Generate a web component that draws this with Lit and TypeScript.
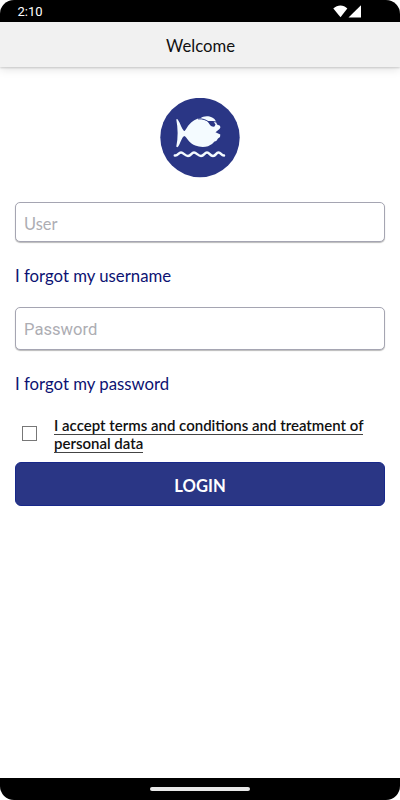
import { LitElement, html, css } from "lit";
import { customElement } from "lit/decorators.js";

@customElement("app-root")
export class AppRoot extends LitElement {
  static styles = css`
    :host { display: block; height: 800px; background: #fff; font-family: Lato, "Liberation Sans", sans-serif; }
    * { box-sizing: border-box; }
    .phone { height: 800px; display: flex; flex-direction: column; overflow: hidden; border-radius: 14px; background: #fff; }
    .status { height: 22px; flex: none; background: #000; display: flex; align-items: center; justify-content: space-between; padding: 1px 38.5px 0 17.5px; color: #fff; font: 13px/20px Roboto, sans-serif; }
    .status svg { display: block; margin-top: -2px; }
    .title { height: 45px; flex: none; background: #f1f1f1; text-align: center; font-size: 16.7px; line-height: 48px; padding-left: 1px; color: #111; box-shadow: 0 1px 2px #00000028, 0 2px 9px #00000020; }
    .content { flex: 1; padding: 31px 15px 0; display: flex; flex-direction: column; }
    .logo { display: block; align-self: center; width: 80px; height: 80px; }
    .field { width: 100%; height: 40px; margin-top: 24px; padding: 2px 8px 0; border: 1px solid #a5a5b2; border-radius: 5px; box-shadow: 0 1px 1px #00000045; background: #fff; font-family: inherit; font-size: 16.4px; color: #111; outline: none; }
    .field::placeholder { color: #adadb3; opacity: 1; }
    .password { height: 43px; margin-top: 22px; font-family: Roboto, sans-serif; font-size: 16.6px; }
    .link { height: 20px; margin-top: 23px; font-size: 16.75px; line-height: 22px; color: #0c1272; white-space: nowrap; }
    .after-password { margin-top: 23px; }
    .terms { display: flex; margin-top: 24px; height: 36px; padding-left: 7px; }
    .box { flex: none; width: 15px; height: 15px; border: 1px solid #777; margin: 9px 17px 0 0; }
    .terms-text { font-size: 15px; font-weight: 600; line-height: 17px; color: #111; white-space: nowrap; }
    .line { border-bottom: 1px solid #444; display: block; width: max-content; height: 18px; }
    .login { height: 44px; margin-top: 9.4px; border: 1px solid #18288a; border-radius: 6px; background: #2a3685; color: #fff; font: 700 16.6px/42px Lato, sans-serif; padding: 2px 0 0; }
    .nav { height: 22px; flex: none; background: #000; display: flex; justify-content: center; padding-top: 9px; }
    .pill { width: 100px; height: 4px; border-radius: 2px; background: #e8e8e8; }
  `;

  render() {
    return html`
      <div class="phone">
        <div class="status">
          <span>2:10</span>
          <svg width="29" height="14" viewBox="0 0 29 14" fill="#fff">
            <path d="M0.3 4.500C4.500 0.500 10.500 0.500 14.300 4.500L7.500 13.300Z" />
            <path d="M28 1.300V13.500H15.500Z" />
          </svg>
        </div>
        <div class="title">Welcome</div>
        <div class="content">
          <svg class="logo" viewBox="0 0 80 80">
            <circle cx="40" cy="39.500" r="39.700" fill="#2a3685" />
            <path fill="#f4fbff" d="M16.300 21.500Q17.200 20.500 18 22C20.500 25.500 21.500 30.500 24 33C25.500 33 26.500 29.500 29 26.700C32 23.300 36 20.500 41 20C43 17.500 53.500 16.800 56 23.500L57 26.500L60 27.700Q61 29.500 59.500 31L55.500 34.200L60.300 36.500Q61 38.500 58 40.500Q57 43 54.500 43.500Q52 47 48 48.200C42 50 33.500 48.500 29 43.300C27 41 26 38.500 24.300 38C21.500 39.500 20.500 45.500 18 48.800Q17 49.800 16.300 48.500Q19 35.500 16.300 21.500Z" />
            <path fill="none" stroke="#2a3685" stroke-width="1" d="M38 20.900C42.500 20.500 46 21.700 49.500 24.500" />
            <path fill="#2a3685" d="M47.500 23L53 23L55.500 26.500L54.500 28.500Q51 29.300 49.300 26Z" />
            <path fill="none" stroke="#2a3685" stroke-width="1" d="M52 23.500L57 24" />
            <path fill="none" stroke="#f4fbff" stroke-width="2.500" stroke-linecap="round" stroke-linejoin="round" d="M14.800 57.500C18 58 18.500 54.500 21 54.500S25 58 28 58S31.500 54.500 34 54.500S38 58 41 58S44.500 54.500 47 54.500S50 58 53 58S56 54.500 58.500 54.500S61 57.500 64 57.500" />
          </svg>
          <input class="field" placeholder="User" />
          <div class="link">I forgot my username</div>
          <input class="field password" type="password" placeholder="Password" />
          <div class="link after-password">I forgot my password</div>
          <div class="terms">
            <span class="box"></span>
            <div class="terms-text">
              <span class="line">I accept terms and conditions and treatment of</span>
              <span class="line">personal data</span>
            </div>
          </div>
          <button class="login">LOGIN</button>
        </div>
        <div class="nav"><div class="pill"></div></div>
      </div>
    `;
  }
}
